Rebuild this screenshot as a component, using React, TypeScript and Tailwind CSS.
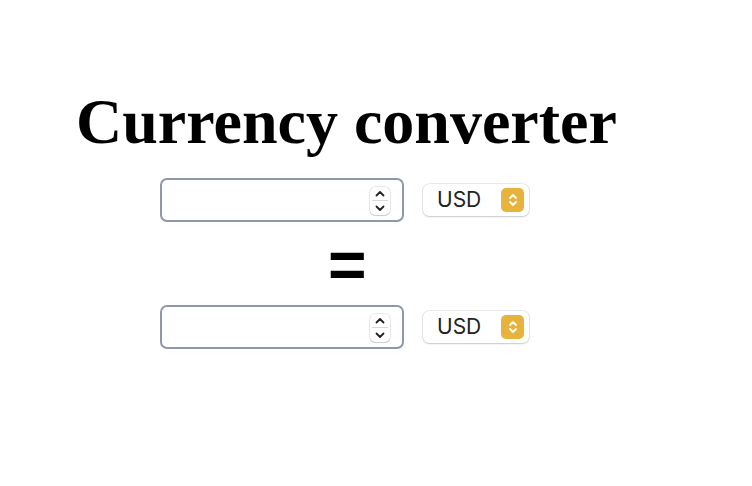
import React from "react";

function Spinner() {
  return (
    <div className="absolute right-[12px] top-[7px] flex h-[28px] w-[20px] flex-col items-center justify-between rounded-[5px] bg-white shadow-[0_0_0_0.5px_rgba(0,0,0,0.18),0_1px_1px_rgba(0,0,0,0.12)]">
      <svg width="20" height="14" viewBox="0 0 20 14">
        <path d="M6.5 8.5 L10 5 L13.5 8.5" fill="none" stroke="#222" strokeWidth="1.8" strokeLinecap="round" strokeLinejoin="round" />
        <line x1="2" y1="13.5" x2="18" y2="13.5" stroke="#d8d8d8" strokeWidth="1" />
      </svg>
      <svg width="20" height="14" viewBox="0 0 20 14">
        <path d="M6.5 5.5 L10 9 L13.5 5.5" fill="none" stroke="#222" strokeWidth="1.8" strokeLinecap="round" strokeLinejoin="round" />
      </svg>
    </div>
  );
}

function Select() {
  return (
    <div className="flex h-[32px] w-[106px] items-center justify-between rounded-[6px] bg-white pl-[14px] pr-[5px] shadow-[0_0_0_0.5px_rgba(0,0,0,0.15),0_1px_2px_rgba(0,0,0,0.15)]">
      <span className="text-[21px] text-[#222]" style={{ fontFamily: "Inter, 'Liberation Sans', sans-serif" }}>USD</span>
      <div className="flex h-[24px] w-[23px] items-center justify-center rounded-[5px] bg-[#e8b33c]">
        <svg width="12" height="18" viewBox="0 0 12 18">
          <path d="M3 7 L6 4 L9 7" fill="none" stroke="#fff" strokeWidth="1.8" strokeLinecap="round" strokeLinejoin="round" />
          <path d="M3 11 L6 14 L9 11" fill="none" stroke="#fff" strokeWidth="1.8" strokeLinecap="round" strokeLinejoin="round" />
        </svg>
      </div>
    </div>
  );
}

function Row() {
  return (
    <div className="flex items-center gap-[19px] pl-[160px]">
      <div className="relative h-[44px] w-[244px] rounded-[7px] border-2 border-[#8f97b0] bg-white">
        <Spinner />
      </div>
      <Select />
    </div>
  );
}

export default function App() {
  return (
    <div className="h-[486px] w-[752px] bg-white">
      <h1
        className="ml-[76px] pt-[85px] text-[64px] font-bold leading-[74px] text-black"
        style={{ fontFamily: "'Liberation Serif', serif" }}
      >
        Currency converter
      </h1>
      <div className="mt-[19px]">
        <Row />
      </div>
      <div
        className="ml-[328px] mt-[23px] h-[40px] text-[66px] font-bold leading-[40px] text-black"
        style={{ fontFamily: "'Liberation Sans', sans-serif" }}
      >
        =
      </div>
      <div className="mt-[20px]">
        <Row />
      </div>
    </div>
  );
}
